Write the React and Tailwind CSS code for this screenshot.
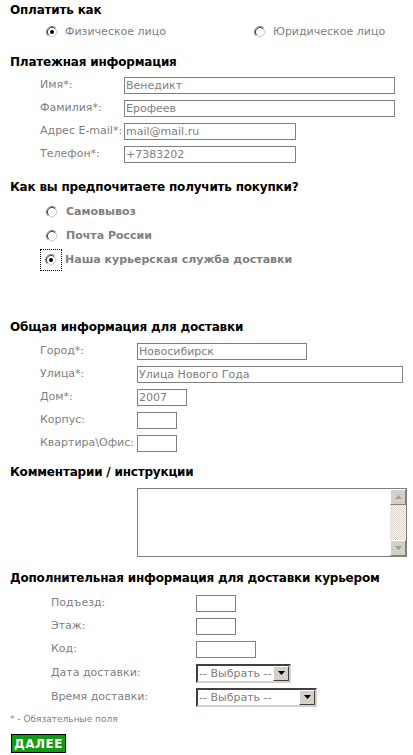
import React from "react";

const font = "font-['DejaVu_Sans',Verdana,sans-serif]";

const Radio = ({ checked }) => (
  <svg width="12" height="12" viewBox="0 0 12 12" className="shrink-0">
    <circle cx="6" cy="6" r="5.5" fill="#ffffff" />
    <path d="M2.1 9.9 A5.5 5.5 0 0 1 9.9 2.1" fill="none" stroke="#808080" strokeWidth="1" />
    <path d="M9.9 2.1 A5.5 5.5 0 0 1 2.1 9.9" fill="none" stroke="#f0f0f0" strokeWidth="1" />
    <path d="M2.8 9.2 A4.5 4.5 0 0 1 9.2 2.8" fill="none" stroke="#404040" strokeWidth="1" />
    <path d="M9.2 2.8 A4.5 4.5 0 0 1 2.8 9.2" fill="none" stroke="#d4d0c8" strokeWidth="1" />
    {checked && <circle cx="6" cy="6" r="2" fill="#000000" />}
  </svg>
);

const Heading = ({ children, className = "" }) => (
  <div className={`h-[20px] flex items-center text-[12px] font-bold text-black tracking-[-0.2px] ${className}`}>
    {children}
  </div>
);

const Field = ({ label, value = "", labelW, inputW }) => (
  <div className="h-[23px] flex items-center">
    <div className="shrink-0 text-[11px] text-[#808080]" style={{ width: labelW }}>
      {label}
    </div>
    <div
      className="h-[17px] border border-[#808080] bg-white text-[11px] text-[#808080] pl-[1px] flex items-center leading-none"
      style={{ width: inputW }}
    >
      {value}
    </div>
  </div>
);

const ArrowBtn = () => (
  <div className="w-[16px] h-[15px] bg-[#d4d0c8] border border-t-white border-l-white border-b-[#404040] border-r-[#404040] flex items-center justify-center">
    <svg width="7" height="4" viewBox="0 0 7 4">
      <path d="M0 0 H7 L3.5 4 Z" fill="#000" />
    </svg>
  </div>
);

const Select = ({ w }) => (
  <div
    className="h-[19px] border-2 border-t-[#404040] border-l-[#404040] border-b-[#d4d0c8] border-r-[#d4d0c8] bg-white flex items-center justify-between"
    style={{ width: w }}
  >
    <span className="text-[11px] text-[#808080] pl-[1px] leading-none">-- Выбрать --</span>
    <ArrowBtn />
  </div>
);

const SelectRow = ({ label, w }) => (
  <div className="h-[24px] flex items-center pl-[41px]">
    <div className="w-[145px] shrink-0 text-[11px] text-[#808080]">{label}</div>
    <Select w={w} />
  </div>
);

const ScrollBtn = ({ up }) => (
  <div className="h-[16px] bg-[#d4d0c8] border border-t-white border-l-white border-b-[#808080] border-r-[#808080] flex items-center justify-center">
    <svg width="7" height="4" viewBox="0 0 7 4">
      <path d={up ? "M0 4 H7 L3.5 0 Z" : "M0 0 H7 L3.5 4 Z"} fill="#a0a0a0" />
    </svg>
  </div>
);

const App = () => {
  return (
    <div className={`w-[413px] h-[755px] bg-white px-[10px] ${font} overflow-hidden`}>
      <Heading>Оплатить как</Heading>

      <div className="h-[24px] flex items-center text-[11px] text-[#808080]">
        <div className="w-[244px] flex items-center gap-[7px] pl-[36px]">
          <Radio checked />
          <span>Физическое лицо</span>
        </div>
        <div className="flex items-center gap-[7px]">
          <Radio />
          <span>Юридическое лицо</span>
        </div>
      </div>

      <Heading className="mt-[8px]">Платежная информация</Heading>

      <div className="pl-[30px] mt-[2px]">
        <Field label="Имя*:" value="Венедикт" labelW={84} inputW={271} />
        <Field label="Фамилия*:" value="Ерофеев" labelW={84} inputW={271} />
        <Field label="Адрес E-mail*:" value="mail@mail.ru" labelW={84} inputW={172} />
        <Field label="Телефон*:" value="+7383202" labelW={84} inputW={172} />
      </div>

      <Heading className="mt-[11px]">Как вы предпочитаете получить покупки?</Heading>

      <div className="mt-[3px] text-[11px] font-bold text-[#808080]">
        <div className="h-[24px] flex items-center gap-[8px] pl-[36px]">
          <Radio />
          <span>Самовывоз</span>
        </div>
        <div className="h-[24px] flex items-center gap-[8px] pl-[36px]">
          <Radio />
          <span>Почта России</span>
        </div>
        <div className="h-[24px] flex items-center gap-[3px] pl-[30px]">
          <div className="w-[22px] h-[22px] border border-dotted border-black flex items-center justify-center">
            <Radio checked />
          </div>
          <span>Наша курьерская служба доставки</span>
        </div>
      </div>

      <Heading className="mt-[45px]">Общая информация для доставки</Heading>

      <div className="pl-[30px] mt-[3px]">
        <Field label="Город*:" value="Новосибирск" labelW={97} inputW={170} />
        <Field label="Улица*:" value="Улица Нового Года" labelW={97} inputW={270} />
        <Field label="Дом*:" value="2007" labelW={97} inputW={50} />
        <Field label="Корпус:" labelW={97} inputW={40} />
        <Field label="Квартира\Офис:" labelW={97} inputW={40} />
      </div>

      <Heading className="mt-[7px]">Комментарии / инструкции</Heading>

      <div className="mt-[6px] ml-[127px] w-[270px] h-[69px] border border-[#808080] bg-white flex justify-end">
        <div className="w-[16px] h-full flex flex-col">
          <ScrollBtn up />
          <div className="flex-1 bg-[repeating-conic-gradient(#d4d0c8_0_25%,#ffffff_0_50%)] bg-[length:2px_2px]" />
          <ScrollBtn />
        </div>
      </div>

      <Heading className="mt-[11px]">Дополнительная информация для доставки курьером</Heading>

      <div className="mt-[4px]">
        <div className="pl-[41px]">
          <Field label="Подъезд:" labelW={145} inputW={40} />
          <Field label="Этаж:" labelW={145} inputW={40} />
          <Field label="Код:" labelW={145} inputW={60} />
        </div>
        <SelectRow label="Дата доставки:" w={95} />
        <SelectRow label="Время доставки:" w={121} />
      </div>

      <div className="h-[16px] mt-[3px] flex items-center text-[9px] text-[#808080]">
        * - Обязательные поля
      </div>

      <div className="mt-[6px] ml-[1px] w-[55px] h-[19px] border border-black bg-[#129c12] flex items-center justify-center">
        <span className="text-[12px] font-bold text-white tracking-[0.5px] leading-none">ДАЛЕЕ</span>
      </div>
    </div>
  );
};

export default App;
